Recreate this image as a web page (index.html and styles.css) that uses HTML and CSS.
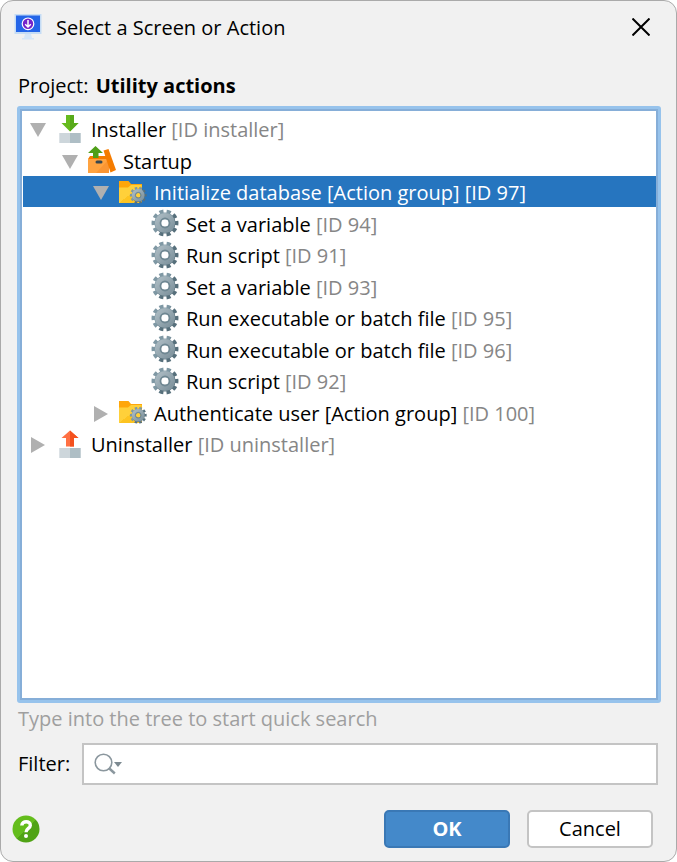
FILE: index.html
```html
<!DOCTYPE html>
<html lang="en">
<head>
<meta charset="utf-8">
<meta name="viewport" content="width=device-width, initial-scale=1">
<title>Select a Screen or Action</title>
<link rel="stylesheet" href="styles.css">
</head>
<body>
<svg class="defs" aria-hidden="true">
  <defs>
    <linearGradient id="teeth" x1="0" y1="0" x2="1" y2="1"><stop offset="0.4" stop-color="#7f98a4"/><stop offset="0.6" stop-color="#566f7b"/></linearGradient>
    <linearGradient id="disc" x1="0" y1="0" x2="1" y2="1"><stop offset="0.1" stop-color="#a6b6be"/><stop offset="0.9" stop-color="#8397a1"/></linearGradient>
    <linearGradient id="folderFill" x1="0" y1="0" x2="1" y2="1"><stop offset="0.5" stop-color="#ffd03a"/><stop offset="0.5" stop-color="#fdc421"/></linearGradient>
    <linearGradient id="helpFill" x1="0" y1="0" x2="1" y2="1"><stop offset="0.5" stop-color="#64bd1c"/><stop offset="0.5" stop-color="#50a315"/></linearGradient>
    <symbol id="gear" viewBox="0 0 28 28">
      <circle cx="14" cy="14" r="11.500" fill="none" stroke="url(#teeth)" stroke-width="4" pathLength="20" stroke-dasharray="1.150 .850" transform="rotate(-10 14 14)"/>
      <circle cx="14" cy="14" r="7.200" fill="none" stroke="url(#teeth)" stroke-width="6.800"/>
      <circle cx="14" cy="14" r="7.200" fill="none" stroke="url(#disc)" stroke-width="5.800"/>
      <circle cx="14" cy="14" r="4.600" fill="none" stroke="#6f8792" stroke-width="1.600"/>
    </symbol>
    <symbol id="folder" viewBox="0 0 28 28">
      <path d="M0 3h9.500l2.500 3h11v19H0z" fill="#ffa60a"/>
      <path d="M0 9.500h9l3-2.500h11v18H0z" fill="url(#folderFill)"/>
      <circle cx="19.300" cy="17.300" r="3" fill="#ffd03a"/>
      <use href="#gear" x="10.500" y="8.500" width="17.500" height="17.500"/>
    </symbol>
    <symbol id="base" viewBox="0 0 28 28">
      <path d="M3.300 18h10.700v10H3.300z" fill="#cdd6db"/>
      <path d="M14 18h10.700v10H14z" fill="#aebec5"/>
    </symbol>
    <symbol id="install" viewBox="0 0 28 28">
      <use href="#base" width="28" height="28"/>
      <path d="M10 0h8v8h4.500L14 16.500 5.500 8H10z" fill="#66bb1e"/>
      <path d="M14 0h4v8h4.500L14 16.500z" fill="#57a91a"/>
    </symbol>
    <symbol id="uninstall" viewBox="0 0 28 28">
      <use href="#base" width="28" height="28"/>
      <path d="M10 16.500V8H5.500L14 .5 22.500 8H18v8.500z" fill="#ff7043"/>
      <path d="M14 .5L22.500 8H18v8.500h-4z" fill="#f4511e"/>
    </symbol>
    <symbol id="box" viewBox="0 0 28 28">
      <path d="M2 10h16l3 3v1H0v-1z" fill="#f57c00"/>
      <path d="M0 13h21v14H0z" fill="#ffa340"/>
      <path d="M21 13v14H8z" fill="#fb9633"/>
      <path d="M15.500 4.500l5-1.500 7.500 21-5.500 2.500z" fill="#f57c00"/>
      <path d="M5 12V7H0l7.500-7L15 7h-4.500v5z" fill="#4f9f18"/>
      <rect x="7.500" y="14.500" width="7" height="3" rx="1.500" fill="#37474f"/>
    </symbol>
    <symbol id="down" viewBox="0 0 16 16"><path d="M0 1h16L8 15z"/></symbol>
    <symbol id="right" viewBox="0 0 16 16"><path d="M1 0l14 8L1 16z"/></symbol>
  </defs>
</svg>
<main class="dialog">
  <header class="titlebar">
    <svg class="app-icon" viewBox="0 0 28 28" aria-hidden="true">
      <path d="M.5 1h27v20H.5z" fill="#c5dcf5"/>
      <path d="M2 2.500h24V19H2z" fill="#2465e8"/>
      <path d="M11 21h6l1 4h2v1.500H8V25h2z" fill="#d5e6f8"/>
      <circle cx="14" cy="10.800" r="5.800" fill="#7523c9" stroke="#fff" stroke-width="1.200"/>
      <path d="M14 7v7M11.200 11.300L14 14l2.800-2.700" fill="none" stroke="#fff" stroke-width="1.500"/>
    </svg>
    <h1 class="title">Select a Screen or Action</h1>
    <button class="close" type="button" aria-label="Close">
      <svg viewBox="0 0 18 18" aria-hidden="true"><path d="M.5.5l17 17M17.500.5l-17 17"/></svg>
    </button>
  </header>
  <p class="project">Project: <strong class="project-name">Utility actions</strong></p>
  <div class="tree" role="tree" tabindex="0" aria-label="Screens and actions">
    <div class="row level-1" role="treeitem" aria-level="1" aria-expanded="true"><svg class="arrow"><use href="#down"/></svg><svg class="icon"><use href="#install"/></svg><span class="label">Installer <span class="id">[ID installer]</span></span></div>
    <div class="row level-2" role="treeitem" aria-level="2" aria-expanded="true"><svg class="arrow"><use href="#down"/></svg><svg class="icon"><use href="#box"/></svg><span class="label">Startup</span></div>
    <div class="row level-3 selected" role="treeitem" aria-level="3" aria-expanded="true" aria-selected="true"><svg class="arrow"><use href="#down"/></svg><svg class="icon"><use href="#folder"/></svg><span class="label">Initialize database [Action group] <span class="id">[ID 97]</span></span></div>
    <div class="row level-4" role="treeitem" aria-level="4"><svg class="icon"><use href="#gear"/></svg><span class="label">Set a variable <span class="id">[ID 94]</span></span></div>
    <div class="row level-4" role="treeitem" aria-level="4"><svg class="icon"><use href="#gear"/></svg><span class="label">Run script <span class="id">[ID 91]</span></span></div>
    <div class="row level-4" role="treeitem" aria-level="4"><svg class="icon"><use href="#gear"/></svg><span class="label">Set a variable <span class="id">[ID 93]</span></span></div>
    <div class="row level-4" role="treeitem" aria-level="4"><svg class="icon"><use href="#gear"/></svg><span class="label">Run executable or batch file <span class="id">[ID 95]</span></span></div>
    <div class="row level-4" role="treeitem" aria-level="4"><svg class="icon"><use href="#gear"/></svg><span class="label">Run executable or batch file <span class="id">[ID 96]</span></span></div>
    <div class="row level-4" role="treeitem" aria-level="4"><svg class="icon"><use href="#gear"/></svg><span class="label">Run script <span class="id">[ID 92]</span></span></div>
    <div class="row level-3" role="treeitem" aria-level="3" aria-expanded="false"><svg class="arrow"><use href="#right"/></svg><svg class="icon"><use href="#folder"/></svg><span class="label">Authenticate user [Action group] <span class="id">[ID 100]</span></span></div>
    <div class="row level-1" role="treeitem" aria-level="1" aria-expanded="false"><svg class="arrow"><use href="#right"/></svg><svg class="icon"><use href="#uninstall"/></svg><span class="label">Uninstaller <span class="id">[ID uninstaller]</span></span></div>
  </div>
  <p class="hint">Type into the tree to start quick search</p>
  <div class="filter">
    <label for="filter">Filter:</label>
    <div class="search">
      <svg class="search-icon" viewBox="0 0 30 22" aria-hidden="true">
        <circle cx="9.500" cy="9.500" r="8.300" fill="none" stroke="#8b979e" stroke-width="1.600"/>
        <path d="M14.800 15l6 5.500" stroke="#8b979e" stroke-width="2.400"/>
        <path d="M20 9h8l-4 5z" fill="#7d8a91"/>
      </svg>
      <input class="search-input" id="filter" type="text">
    </div>
  </div>
  <footer class="footer">
    <button class="help" type="button" aria-label="Help">
      <svg viewBox="0 0 28 28" aria-hidden="true">
        <circle cx="14" cy="14" r="13.500" fill="url(#helpFill)"/>
        <path d="M9.800 10.500C10 5.500 18.500 5.500 18.300 10.500 18.200 13.500 14 13.500 14 17.300" fill="none" stroke="#fff" stroke-width="3.400"/>
        <circle cx="14" cy="21" r="2" fill="#fff"/>
      </svg>
    </button>
    <button class="button primary" type="button">OK</button>
    <button class="button" type="button">Cancel</button>
  </footer>
</main>
</body>
</html>
```
FILE: styles.css
```css
* { box-sizing: border-box; }

body {
  margin: 0;
  background: #fff;
  color: #000;
  font: 20px/28px "Open Sans", "Noto Sans", sans-serif;
}

button, input { font: inherit; color: inherit; }

svg { display: block; flex: none; }

.defs { position: absolute; width: 0; height: 0; }

.dialog {
  display: flex;
  flex-direction: column;
  min-height: 100vh;
  padding: 0 15px 13px 16px;
  border: 1px solid #aaa;
  border-radius: 13px;
  background: #f1f1f1;
}

.titlebar { display: flex; align-items: center; height: 52px; margin-left: -3px; }
.app-icon { width: 28px; height: 28px; }
.title { flex: 1; margin: 0 0 0 14px; padding-top: 2px; font-size: 20px; font-weight: 400; }
.close { padding: 8px; margin-right: 3px; border: 0; background: none; }
.close svg { width: 18px; height: 18px; fill: none; stroke: #000; stroke-width: 2; }

.project { margin: 19px 0 6px 1px; }
.project-name { margin-left: 2px; }

.tree {
  flex: 1;
  padding: 4px 2px 2px 3px;
  border: 3px solid #97c3ec;
  border-radius: 3px;
  outline: 2px solid #86aed8;
  outline-offset: -5px;
  background: #fff;
}

.row { display: flex; align-items: center; height: 31px; }
.row:nth-child(even) { height: 32px; }
.level-1 { padding-left: 7px; }
.level-2 { padding-left: 39px; }
.level-3 { padding-left: 70px; }
.level-4 { padding-left: 128px; }
.selected { background: #2675bf; color: #fff; }
.arrow { width: 16px; height: 16px; margin: 3px 10px 0 0; fill: #b0b0b0; }
.icon { width: 28px; height: 28px; margin-right: 7px; }
.label { padding-top: 3px; white-space: nowrap; }
.id { color: #868686; }
.selected .id { color: inherit; }

.hint { margin: 2px 0 10px 1px; color: #9f9f9f; }

.filter { display: flex; align-items: center; gap: 12px; padding: 0 3px 0 1px; }
.search {
  display: flex;
  flex: 1;
  align-items: center;
  height: 42px;
  padding-left: 10px;
  border: 2px solid #c4c4c4;
  background: #fff;
}
.search-icon { width: 30px; height: 22px; }
.search-input { flex: 1; min-width: 0; padding: 0 8px; border: 0; outline: 0; background: none; }

.footer { display: flex; align-items: center; gap: 17px; margin-top: 25px; padding-right: 8px; }
.help { margin: 0 auto 0 -5px; padding: 0; border: 0; background: none; }
.help svg { width: 28px; height: 28px; }
.button {
  width: 126px;
  height: 38px;
  padding: 0;
  border: 2px solid #c4c4c4;
  border-radius: 5px;
  background: #fff;
}
.primary { border-color: #3a78b5; background: #4489ca; color: #fff; font-weight: 700; }
```
